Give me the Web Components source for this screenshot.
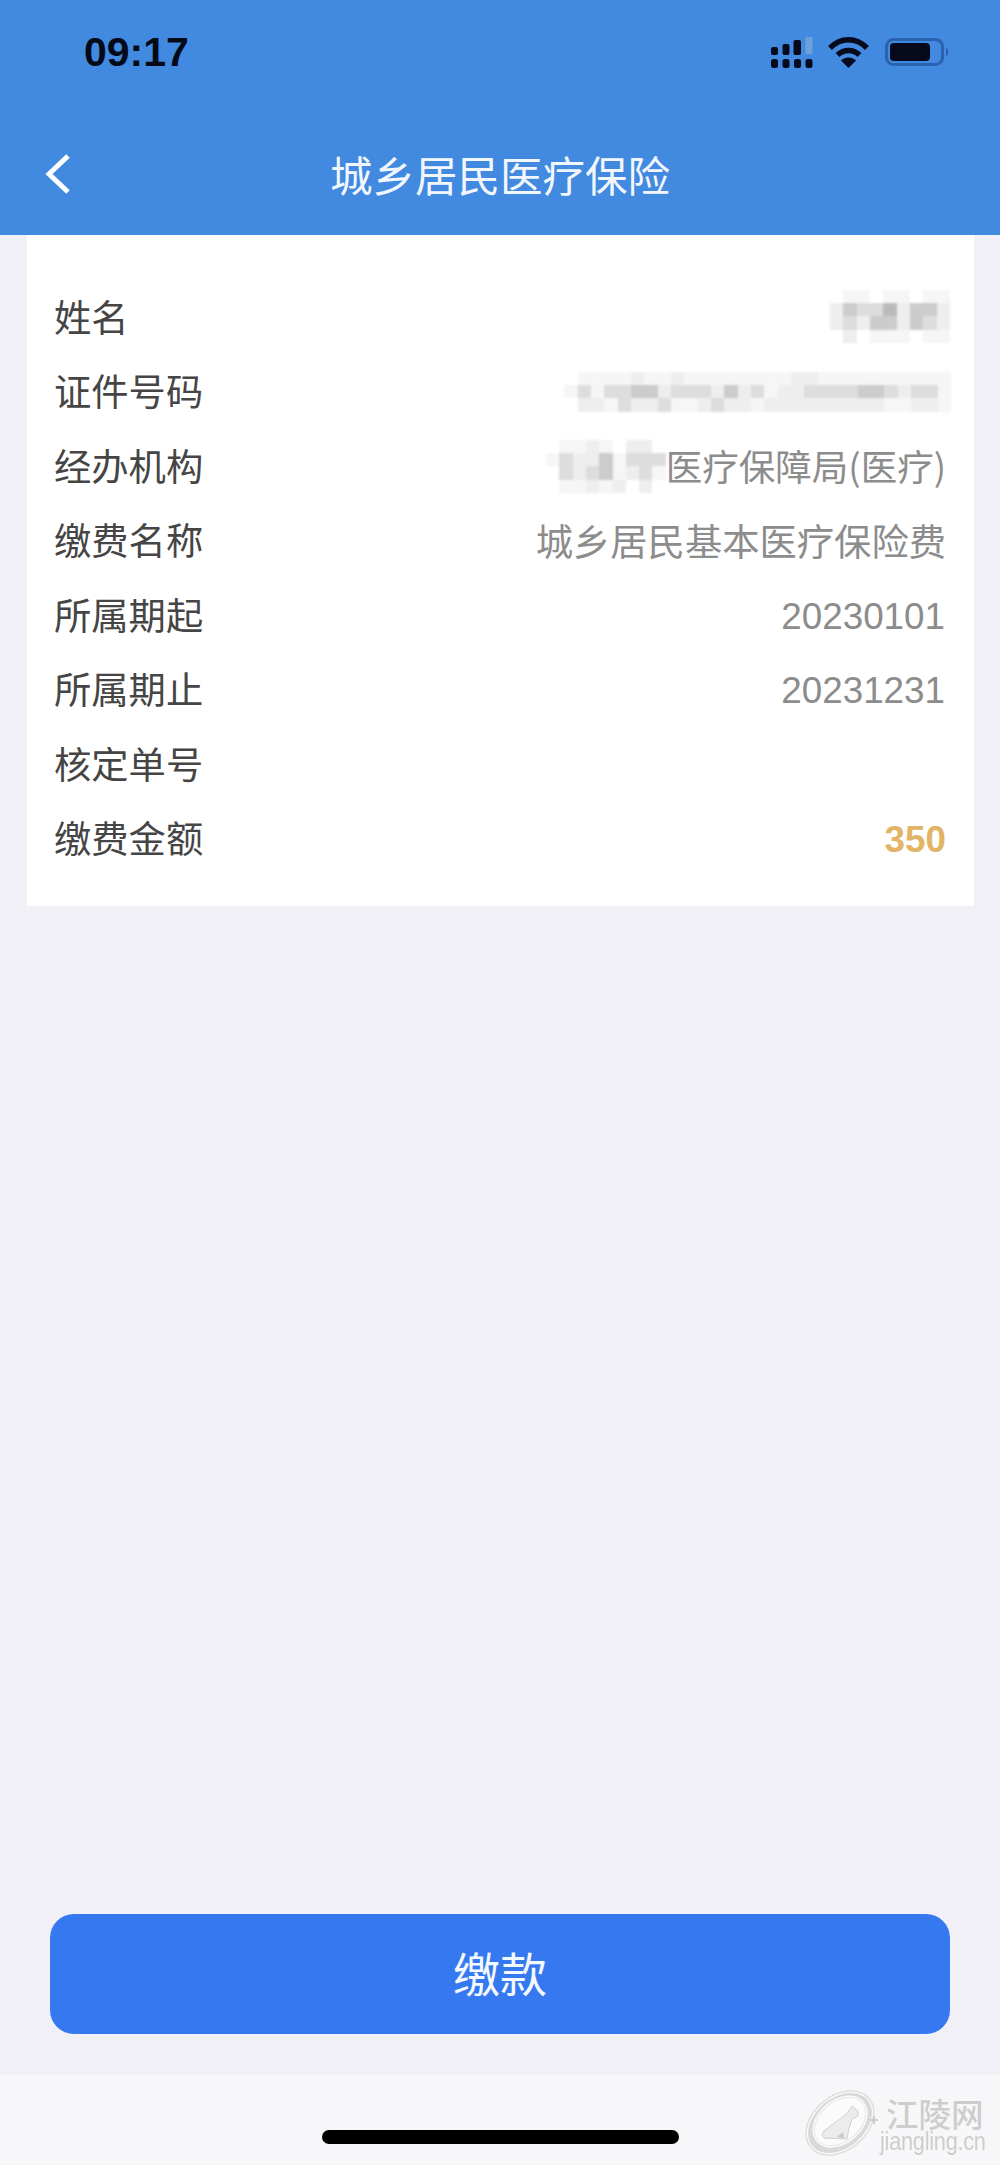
<!DOCTYPE html>
<html lang="zh-CN"><head><meta charset="utf-8"><title>城乡居民医疗保险</title>
<style>
html,body{margin:0;padding:0;background:#f0f0f6}
body{font-family:"Noto Sans CJK SC","Liberation Sans",sans-serif}
.num{font-family:"Liberation Sans",sans-serif;font-size:36.800px;margin-top:5px;margin-right:1px}
</style></head><body>
<app-shell>
  <status-bar slot="top"></status-bar>
  <nav-bar slot="top" title="城乡居民医疗保险"></nav-bar>
  <info-card>
    <info-row label="姓名"><pixel-mosaic style="margin:-1px -4px 0 0" rows=".ff.ff.ff|ecddbecce|edecceCde|.e.fff.ff"></pixel-mosaic></info-row>
    <info-row label="证件号码"><pixel-mosaic style="margin:1px -5px 0 0" rows=".ffffeffeffffffffeeffffffffff|fdfddccedddecedfeeddddccdeddf|.eefdeedffedeefeeeeeeeeeffeef"></pixel-mosaic></info-row>
    <info-row label="经办机构"><pixel-mosaic style="margin-top:1px" rows=".ffef.ee.|fdeecfddd|.dedcfedf|.ffefe.e."></pixel-mosaic><span style="font-size:36.500px">医疗保障局(医疗)</span></info-row>
    <info-row label="缴费名称">城乡居民基本医疗保险费</info-row>
    <info-row label="所属期起"><span class="num">20230101</span></info-row>
    <info-row label="所属期止"><span class="num">20231231</span></info-row>
    <info-row label="核定单号"></info-row>
    <info-row label="缴费金额"><span class="num" style="font-weight:700;color:#e2b466;margin-right:0">350</span></info-row>
  </info-card>
  <pay-button slot="bottom">缴款</pay-button>
  <home-bar slot="bottom"></home-bar>
  <site-watermark slot="bottom"></site-watermark>
</app-shell>
<script>
function def(name, html, setup){
  customElements.define(name, class extends HTMLElement{
    constructor(){super();this.attachShadow({mode:'open'}).innerHTML=html;}
    connectedCallback(){ if(setup) setup.call(this,this.shadowRoot); }
  });
}
def('app-shell',`<style>
:host{display:flex;flex-direction:column;width:1000px;height:2165px;overflow:hidden;position:relative;background:#f0f0f6}
main{flex:1;min-height:0}
</style><slot name="top"></slot><main><slot></slot></main><slot name="bottom"></slot>`);

def('status-bar',`<style>
:host{display:flex;align-items:center;justify-content:space-between;height:107px;background:#4289e0;padding:0 50px 3px 84px;box-sizing:border-box;color:#050a18}
.t{font:700 41px/1 "Liberation Sans",sans-serif}
.i{display:flex;align-items:center;gap:15px}
svg{display:block}
</style><span class="t">09:17</span><div class="i">
<svg width="42" height="31" viewBox="0 0 42 31" fill="#060a1c">
<rect x="0" y="10" width="7" height="8" rx="2"/><rect x="11.500" y="7" width="7" height="11" rx="2"/><rect x="22.500" y="3" width="7.500" height="15" rx="2"/><rect x="34.500" y="0" width="7" height="17" fill="#6f9fd8"/>
<rect x="0" y="22" width="7" height="9" rx="2.500"/><rect x="11.500" y="22" width="7" height="9" rx="2.500"/><rect x="23" y="22" width="7" height="9" rx="2.500"/><rect x="34.500" y="22" width="7" height="9" rx="2.500"/></svg>
<svg width="41" height="31" viewBox="0 0 41 31" fill="none" stroke="#060a1c" stroke-width="5.500">
<path d="M2 11C13 0 28 0 39 11"/><path d="M9.500 18C16 12 25 12 31.500 18"/><path d="M13 23.500L20.500 31L28 23.500C24 19.500 17 19.500 13 23.500Z" fill="#060a1c" stroke="none"/></svg>
<svg width="65" height="28" viewBox="0 0 65 28" style="margin-left:1px">
<rect x="1.500" y="1.500" width="56" height="25" rx="7" fill="none" stroke="#2a62ad" stroke-width="3"/>
<rect x="5" y="5" width="40" height="18" rx="4" fill="#060a1c"/>
<path d="M61 10C64 11 64 17 61 18Z" fill="#2a62ad"/></svg></div>`);

def('nav-bar',`<style>
:host{display:flex;align-items:center;justify-content:center;position:relative;height:128px;background:#4289e0;padding-top:6px;box-sizing:border-box;color:#f2f7fd}
h1{margin:0;font:400 42.500px/1 "Noto Sans CJK SC",sans-serif}
svg{position:absolute;left:45px;top:47px}
</style><svg width="26" height="40" viewBox="0 0 26 40" fill="none" stroke="#fff" stroke-width="5"><path d="M23 2L4 20L23 38"/></svg><h1></h1>`,
function(r){r.querySelector('h1').textContent=this.getAttribute('title');});

def('info-card',`<style>
:host{display:block;margin:0 26px 0 27px;background:#fff;padding:46px 28px 29px 27px}
</style><slot></slot>`);

def('info-row',`<style>
:host{display:flex;align-items:center;justify-content:space-between;height:74.500px;font:400 37.300px/1 "Noto Sans CJK SC","Liberation Sans",sans-serif}
.l{color:#454545;white-space:nowrap;margin-top:-4px}
.v{display:flex;align-items:center;color:#8c8c8c;white-space:nowrap;margin-top:-3px}
</style><span class="l"></span><span class="v"><slot></slot></span>`,
function(r){r.querySelector('.l').textContent=this.getAttribute('label');});

def('pixel-mosaic',`<style>
:host{display:inline-block;filter:blur(.8px)}
.r{display:flex}
i{display:block;width:13.330px;height:13.330px}
</style><div id="m"></div>`,
function(r){
  r.getElementById('m').innerHTML=this.getAttribute('rows').split('|').map(row=>'<div class="r">'+[...row].map(c=>{
    c=c.toLowerCase();
    const col=c==='.'?'transparent':c==='f'?'#f6f6f6':'#'+c+c+c+c+c+c;
    return `<i style="background:${col}"></i>`;
  }).join('')+'</div>').join('');
});

def('pay-button',`<style>
:host{display:block;margin:0 50px 41px}
button{display:block;width:100%;height:120px;border:0;border-radius:24px;background:#3578f0;color:#f4f8ff;font:400 47px/1 "Noto Sans CJK SC",sans-serif;padding:0 0 5px}
</style><button><slot></slot></button>`);

def('home-bar',`<style>
:host{display:flex;justify-content:center;height:90px;background:#f7f7f9;padding-top:55px;box-sizing:border-box}
i{display:block;width:357px;height:14px;border-radius:7px;background:#000}
</style><i></i>`);

def('site-watermark',`<style>
:host{position:absolute;left:800px;top:2088px;width:195px;height:72px;color:#cdcdcd}
svg{position:absolute;left:0;top:0}
.a{position:absolute;left:86px;top:10px;font:500 32.500px/30px "Noto Sans CJK SC",sans-serif;white-space:nowrap;text-shadow:0 0 1px #fff}
.b{position:absolute;left:80px;top:41px;font:400 25px/24px "Liberation Sans",sans-serif;white-space:nowrap;letter-spacing:-.3px;transform-origin:0 0;transform:scaleX(.87)}
</style>
<svg width="84" height="72" viewBox="0 0 84 72">
<g transform="rotate(-40 40 35)">
<ellipse cx="40" cy="35" rx="38" ry="27" fill="#fbfbfb" stroke="#dedede" stroke-width="1.500"/>
<path fill-rule="evenodd" fill="#d9d9d9" d="M4 35a36 25 0 1 0 72 0a36 25 0 1 0 -72 0ZM10 34a31 22 0 1 1 62 0a31 22 0 1 1 -62 0Z"/>
<ellipse cx="41" cy="34" rx="29" ry="20" fill="#fbfbfb" stroke="#e6e6e6" stroke-width="1"/>
</g>
<path d="M58 23L52 18L49 23L44 28L33 36L24 43L22 47L24 50L47 51L49 40L52 31L58 28Z" fill="#ececec" stroke="#d0d0d0" stroke-width="1"/>
<path d="M37 49L43 44L44 50Z" fill="#c8c8c8"/>
<path d="M74 28v8M70 32h8" stroke="#c4c4c4" stroke-width="1.500" fill="none"/>
</svg>
<span class="a">江陵网</span><span class="b">jiangling.cn</span>`);
</script>
</body></html>
